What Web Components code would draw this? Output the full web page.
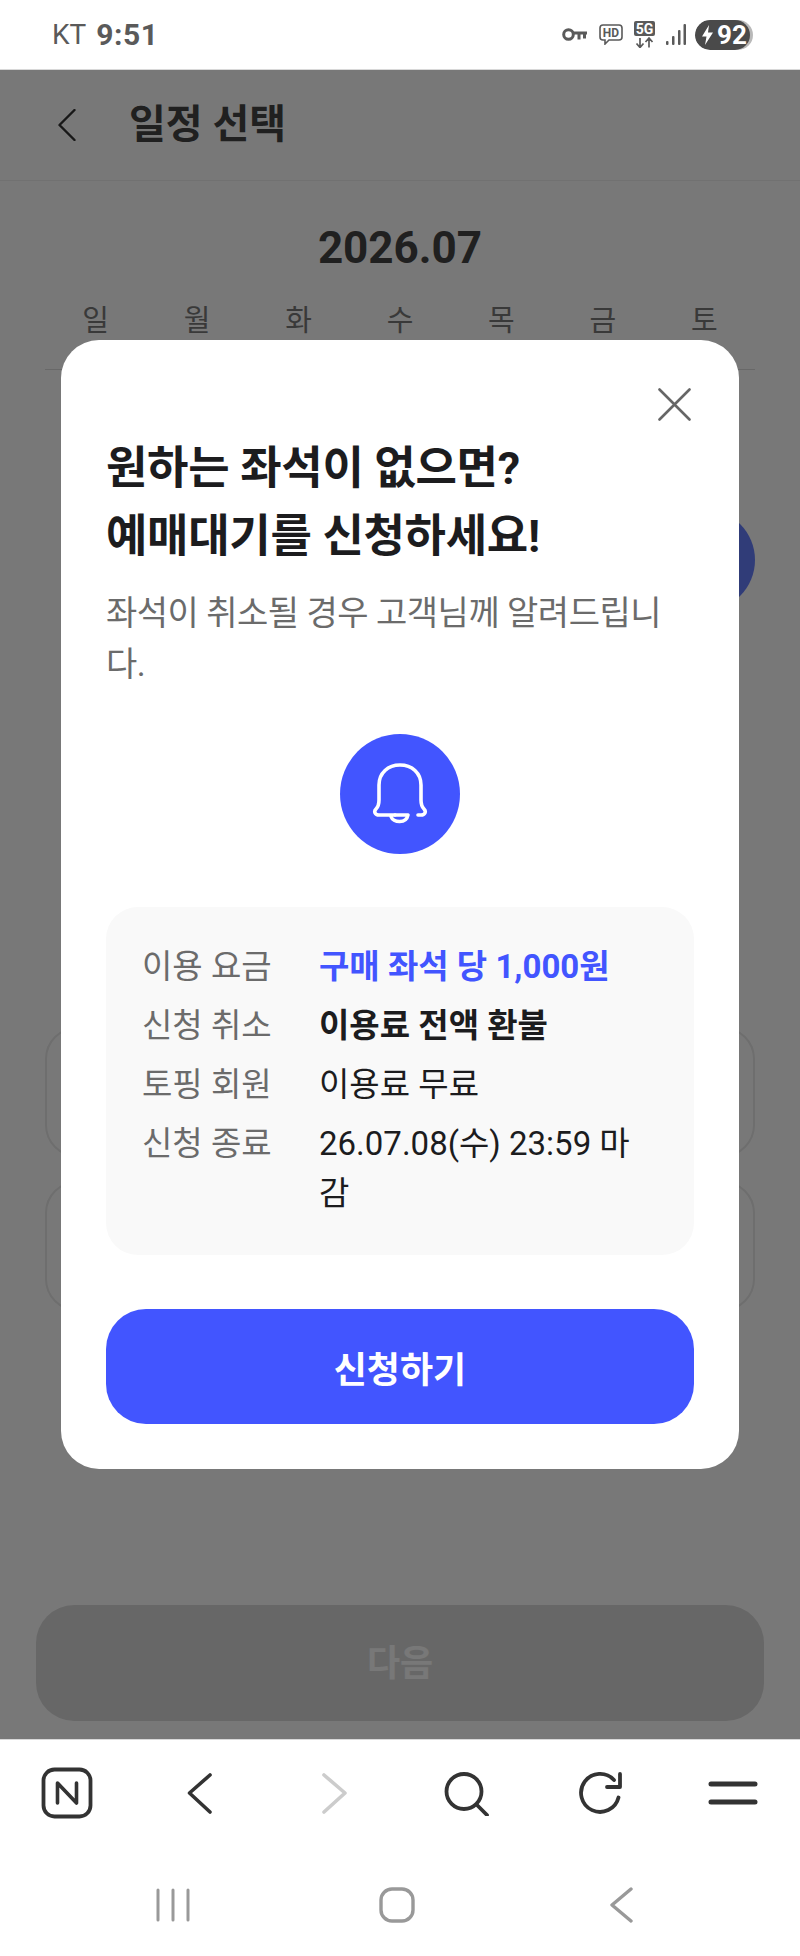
<!DOCTYPE html>
<html lang="ko">
<head>
<meta charset="utf-8">
<title>일정 선택</title>
<style>
  html, body { margin: 0; padding: 0; }
  body {
    width: 800px;
    height: 1956px;
    overflow: hidden;
    display: flex;
    flex-direction: column;
    background: #fff;
    font-family: Roboto, "Noto Sans CJK KR", sans-serif;
  }
</style>
</head>
<body>
  <status-bar></status-bar>
  <page-main>
    <schedule-view></schedule-view>
    <waitlist-modal slot="overlay">
      <info-row label="이용 요금" kind="accent">구매 좌석 당 1,000원</info-row>
      <info-row label="신청 취소" kind="strong">이용료 전액 환불</info-row>
      <info-row label="토핑 회원">이용료 무료</info-row>
      <info-row label="신청 종료">26.07.08(수) 23:59 마감</info-row>
    </waitlist-modal>
  </page-main>
  <browser-toolbar></browser-toolbar>
  <nav-bar></nav-bar>

<script>
class StatusBar extends HTMLElement {
  constructor() {
    super();
    this.attachShadow({ mode: "open" });
    this.shadowRoot.innerHTML = `
      <style>
        :host {
          display: flex;
          align-items: center;
          height: 69px;
          padding: 0 47px 0 52px;
          border-bottom: 1px solid #d8d8d8;
          background: #fff;
          color: #5a5a5a;
          font-size: 28px;
          flex: none;
        }
        .time { font-weight: 700; font-size: 30px; margin-left: 10px; letter-spacing: 0.5px; }
        .icons { margin-left: auto; display: flex; align-items: center; }
        svg { display: block; flex: none; }
        .key { margin-right: 11px; }
        .hd { margin-right: 11px; }
        .fiveg { margin-right: 11px; }
        .signal { margin-right: 9px; }
        .battery {
          display: flex;
          align-items: center;
          width: 58px;
          height: 30px;
          border-radius: 15px;
          background: #b9b9b9;
          overflow: hidden;
        }
        .fill {
          display: flex;
          align-items: center;
          width: 55px;
          height: 30px;
          border-radius: 15px;
          background: #4a4a4a;
          color: #fff;
          font-size: 26px;
          font-weight: 700;
        }
        .fill svg { margin: 0 4px 0 7px; }
      </style>
      <span>KT</span><span class="time">9:51</span>
      <div class="icons">
        <svg class="key" width="26" height="13" viewBox="0 0 26 13" fill="none" stroke="#5a5a5a" stroke-width="3">
          <circle cx="6.500" cy="6.500" r="4.800"/>
          <path d="M11 5H25M17 5V11.500M22.500 5V10.500"/>
        </svg>
        <svg class="hd" width="24" height="21" viewBox="0 0 24 21" fill="none">
          <path d="M4 1H20A3 3 0 0 1 23 4V13A3 3 0 0 1 20 16H10L6 20V16H4A3 3 0 0 1 1 13V4A3 3 0 0 1 4 1Z" stroke="#5a5a5a" stroke-width="1.600"/>
          <text x="12" y="13" text-anchor="middle" font-family="Roboto" font-size="12" font-weight="700" fill="#5a5a5a">HD</text>
        </svg>
        <svg class="fiveg" width="21" height="27" viewBox="0 0 21 27" fill="none">
          <rect width="21" height="15" rx="2" fill="#5a5a5a"/>
          <text x="10.500" y="12.500" text-anchor="middle" font-family="Roboto" font-size="14" font-weight="700" fill="#fff">5G</text>
          <path d="M6 17V26M2.500 22.500L6 26.500L9.500 22.500M15 26.500V17.500M11.500 21L15 17L18.500 21" stroke="#5a5a5a" stroke-width="1.700"/>
        </svg>
        <svg class="signal" width="20" height="21" viewBox="0 0 20 21" fill="#5a5a5a">
          <rect x="0" y="17" width="2.500" height="4" rx="1"/>
          <rect x="6" y="12" width="2.500" height="9" rx="1"/>
          <rect x="12" y="6" width="2.500" height="15" rx="1"/>
          <rect x="17.500" y="0" width="2.500" height="21" rx="1"/>
        </svg>
        <div class="battery">
          <div class="fill">
            <svg width="11" height="20" viewBox="0 0 11 20" fill="#fff"><path d="M7 0L0 11.500H4.500L3 20L11 7.500H6Z"/></svg>92
          </div>
        </div>
      </div>
    `;
  }
}
customElements.define("status-bar", StatusBar);

class PageMain extends HTMLElement {
  constructor() {
    super();
    this.attachShadow({ mode: "open" });
    this.shadowRoot.innerHTML = `
      <style>
        :host {
          display: block;
          position: relative;
          flex: none;
          height: 1669px;
          overflow: hidden;
        }
        .scrim {
          position: absolute;
          inset: 0;
          display: flex;
          align-items: center;
          justify-content: center;
          background: rgba(0, 0, 0, 0.53);
        }
      </style>
      <slot></slot>
      <div class="scrim"><slot name="overlay"></slot></div>
    `;
  }
}
customElements.define("page-main", PageMain);

class ScheduleView extends HTMLElement {
  constructor() {
    super();
    this.attachShadow({ mode: "open" });
    const days = ["일", "월", "화", "수", "목", "금", "토"];
    this.shadowRoot.innerHTML = `
      <style>
        :host {
          display: flex;
          flex-direction: column;
          height: 1669px;
          background: #fff;
          color: #444;
        }
        header {
          display: flex;
          align-items: center;
          height: 111px;
          box-sizing: border-box;
          border-bottom: 1px solid #f0f0f0;
          flex: none;
        }
        header svg { margin-left: 58px; }
        h1 {
          margin: 0 0 0 53px;
          font-size: 40px;
          font-weight: 700;
          line-height: 50px;
        }
        .month {
          margin-top: 39px;
          text-align: center;
          font-size: 44px;
          font-weight: 700;
          line-height: 56px;
        }
        .week, .dates {
          display: grid;
          grid-template-columns: repeat(7, 1fr);
          margin: 0 45px;
        }
        .week {
          margin-top: 25px;
          padding-bottom: 28px;
          border-bottom: 1px solid #dedede;
          color: #7a7a7a;
          font-size: 29px;
          line-height: 40px;
          text-align: center;
        }
        .dates { margin-top: 139px; }
        .picked {
          grid-column: 7;
          justify-self: center;
          width: 102px;
          height: 102px;
          border-radius: 50%;
          background: #6680ff;
        }
        .card {
          height: 126px;
          margin: 0 45px;
          border: 2px solid #e9e9e9;
          border-radius: 32px;
        }
        .card.first { margin-top: 416px; }
        .card.second { margin-top: 24px; }
        .next {
          margin: auto 36px 18px;
          height: 110px;
          padding-bottom: 6px;
          border-radius: 38px;
          background: #dcdcdc;
          color: #fff;
          display: flex;
          align-items: center;
          justify-content: center;
          font-size: 36px;
          font-weight: 700;
        }
      </style>
      <header>
        <svg width="18" height="32" viewBox="0 0 18 32" fill="none" stroke="#333" stroke-width="2.400" stroke-linecap="round" stroke-linejoin="round"><path d="M16.500 1L1.500 16L16.500 31"/></svg>
        <h1>일정 선택</h1>
      </header>
      <div class="month">2026.07</div>
      <div class="week">${days.map((d) => `<span>${d}</span>`).join("")}</div>
      <div class="dates"><div class="picked"></div></div>
      <div class="card first"></div>
      <div class="card second"></div>
      <div class="next">다음</div>
    `;
  }
}
customElements.define("schedule-view", ScheduleView);

class WaitlistModal extends HTMLElement {
  constructor() {
    super();
    this.attachShadow({ mode: "open" });
    this.shadowRoot.innerHTML = `
      <style>
        :host {
          display: block;
          width: 678px;
          box-sizing: border-box;
          padding: 48px 45px 45px;
          border-radius: 38px;
          background: #fff;
          color: #1c1c1e;
        }
        .close { display: flex; justify-content: flex-end; padding-right: 3px; }
        .close svg { display: block; }
        h2 {
          margin: 14px 0 0;
          font-size: 45px;
          font-weight: 700;
          line-height: 68px;
          letter-spacing: -0.3px;
        }
        p {
          margin: 17px 0 0;
          color: #6b6b6b;
          font-size: 34px;
          line-height: 51px;
          letter-spacing: -0.5px;
          word-break: break-all;
        }
        .bell {
          display: flex;
          align-items: center;
          justify-content: center;
          width: 120px;
          height: 120px;
          margin: 44px auto 0;
          border-radius: 50%;
          background: #4255ff;
        }
        .info {
          display: flex;
          flex-direction: column;
          gap: 9px;
          margin-top: 53px;
          padding: 35px 36px 36px;
          border-radius: 32px;
          background: #f9f9f9;
        }
        button {
          display: block;
          width: 100%;
          height: 115px;
          margin-top: 54px;
          border: 0;
          border-radius: 40px;
          background: #4255ff;
          color: #fff;
          font: 700 36px Roboto, "Noto Sans CJK KR", sans-serif;
        }
      </style>
      <div class="close">
        <svg width="33" height="33" viewBox="0 0 33 33" fill="none" stroke="#666" stroke-width="2.600" stroke-linecap="round"><path d="M1.500 1.500L31.500 31.500M31.500 1.500L1.500 31.500"/></svg>
      </div>
      <h2>원하는 좌석이 없으면?<br>예매대기를 신청하세요!</h2>
      <p>좌석이 취소될 경우 고객님께 알려드립니다.</p>
      <div class="bell">
        <svg width="56" height="64" viewBox="0 0 56 64" fill="none" stroke="#fff" stroke-width="3.600" stroke-linecap="round" stroke-linejoin="round">
          <path d="M23 53H7C3 53 1.500 49.500 4 47C6.500 44.500 7 42 7 38V23C7 11 16 3 28 3C40 3 49 11 49 23V38C49 42 49.500 44.500 52 47C54.500 49.500 53 53 49 53H46"/>
          <path d="M19 54.500C21 60.500 34 62.500 36 53H23"/>
        </svg>
      </div>
      <div class="info"><slot></slot></div>
      <button>신청하기</button>
    `;
  }
}
customElements.define("waitlist-modal", WaitlistModal);

class InfoRow extends HTMLElement {
  constructor() {
    super();
    this.attachShadow({ mode: "open" });
    const label = this.getAttribute("label") || "";
    this.shadowRoot.innerHTML = `
      <style>
        :host {
          display: grid;
          grid-template-columns: 177px 1fr;
          font-size: 33px;
          line-height: 50px;
        }
        .label { color: #6b6b6b; }
        .value { color: #1c1c1e; word-break: break-all; }
        :host([kind="accent"]) .value { color: #4255ff; font-weight: 700; }
        :host([kind="strong"]) .value { font-weight: 700; }
      </style>
      <span class="label">${label}</span>
      <span class="value"><slot></slot></span>
    `;
  }
}
customElements.define("info-row", InfoRow);

class BrowserToolbar extends HTMLElement {
  constructor() {
    super();
    this.attachShadow({ mode: "open" });
    this.shadowRoot.innerHTML = `
      <style>
        :host {
          display: grid;
          grid-template-columns: repeat(6, 1fr);
          align-items: center;
          justify-items: center;
          height: 106px;
          border-top: 1px solid #d8d8d8;
          background: #fff;
          flex: none;
        }
        svg { display: block; }
      </style>
      <svg width="52" height="52" viewBox="0 0 52 52" fill="none" stroke="#333" stroke-linecap="round" stroke-linejoin="round">
        <rect x="2.500" y="2.500" width="47" height="47" rx="11" stroke-width="3.800"/>
        <path d="M16.500 36V16L35.500 36V16" stroke-width="3.600"/>
      </svg>
      <svg width="26" height="42" viewBox="0 0 26 42" fill="none" stroke="#333" stroke-width="3.600" stroke-linecap="round" stroke-linejoin="round"><path d="M23 3L2.500 21L23 40"/></svg>
      <svg width="28" height="42" viewBox="0 0 28 42" fill="none" stroke="#ccc" stroke-width="3.600" stroke-linecap="round" stroke-linejoin="round"><path d="M5 3L26 21L5 40"/></svg>
      <svg width="46" height="46" viewBox="0 0 46 46" fill="none" stroke="#333" stroke-width="3.800" stroke-linecap="round"><circle cx="20" cy="21.500" r="17.500"/><path d="M33 35L43 45"/></svg>
      <svg width="46" height="46" viewBox="0 0 46 46" fill="none" stroke="#333" stroke-width="3.800" stroke-linecap="round" stroke-linejoin="round"><path d="M41.500 27.500A19 19 0 1 1 37 10"/><path d="M43 4V17H30"/></svg>
      <svg width="50" height="24" viewBox="0 0 50 24" fill="none" stroke="#333" stroke-width="5" stroke-linecap="round"><path d="M3 3H47M3 21H47"/></svg>
    `;
  }
}
customElements.define("browser-toolbar", BrowserToolbar);

class NavBar extends HTMLElement {
  constructor() {
    super();
    this.attachShadow({ mode: "open" });
    this.shadowRoot.innerHTML = `
      <style>
        :host {
          display: grid;
          grid-template-columns: repeat(3, 224px);
          align-items: center;
          justify-items: center;
          height: 102px;
          padding: 8px 0 0 61px;
          background: #fff;
          flex: none;
        }
        svg { display: block; }
      </style>
      <svg width="34" height="34" viewBox="0 0 34 34" fill="none" stroke="#999" stroke-width="3" stroke-linecap="round"><path d="M2 2V32M17 2V32M32 2V32"/></svg>
      <svg width="36" height="36" viewBox="0 0 36 36" fill="none" stroke="#999" stroke-width="3.400"><rect x="2" y="2" width="32" height="32" rx="11"/></svg>
      <svg width="24" height="36" viewBox="0 0 24 36" fill="none" stroke="#999" stroke-width="3.400" stroke-linecap="round" stroke-linejoin="round"><path d="M22 2L3 18L22 34"/></svg>
    `;
  }
}
customElements.define("nav-bar", NavBar);
</script>
</body>
</html>
